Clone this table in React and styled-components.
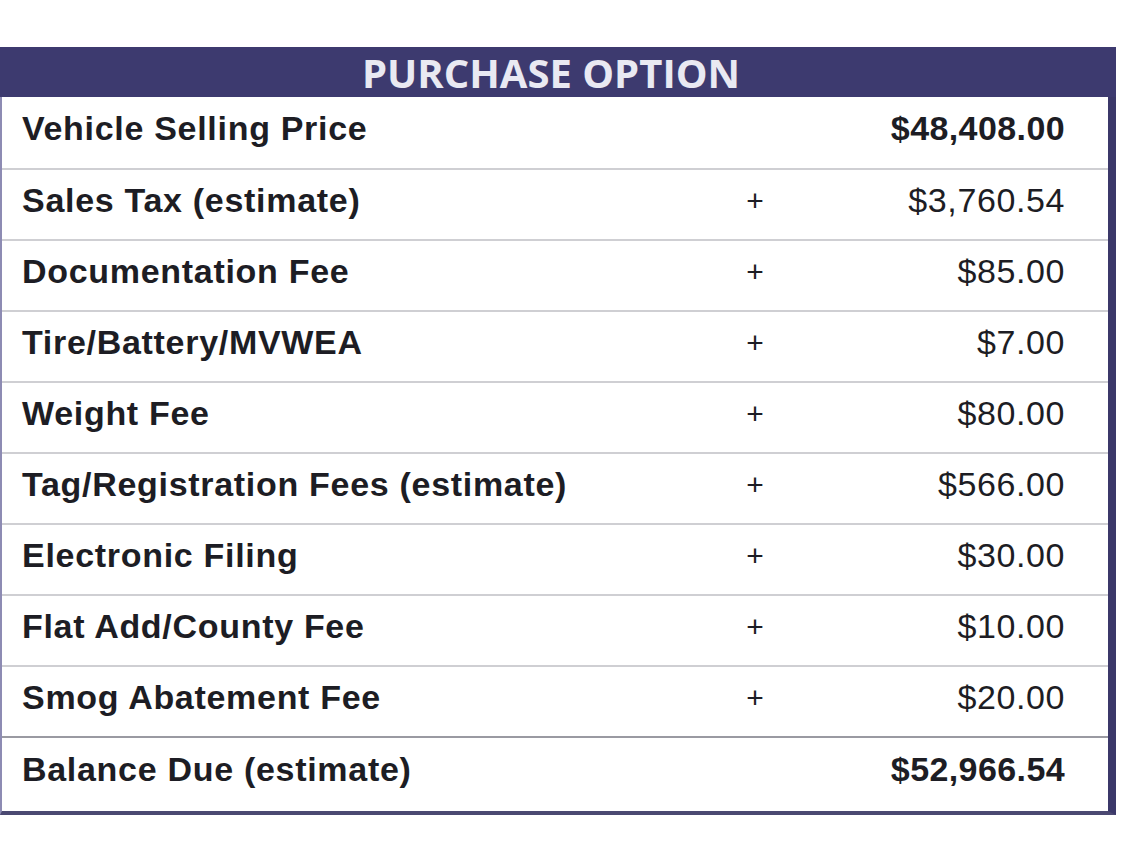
import React from "react";
import styled, { createGlobalStyle } from "styled-components";

const Global = createGlobalStyle`
  html, body { margin: 0; padding: 0; background: #ffffff; }
  body { font-family: "Liberation Sans", Arial, sans-serif; }
`;

const Page = styled.div`
  padding-top: 47px;
  width: 1125px;
  height: 866px;
  box-sizing: border-box;
  background: #ffffff;
`;

const Table = styled.div`
  width: 1116px;
  box-sizing: border-box;
  display: flex;
  flex-direction: column;
`;

const Header = styled.div`
  height: 50px;
  background: #3d3a6f;
  color: #e9e9f2;
  display: flex;
  align-items: center;
  justify-content: center;
  font-family: "Open Sans", "Liberation Sans", sans-serif;
  font-weight: 700;
  font-size: 40px;
  letter-spacing: 0;
  padding-right: 14px;
`;

const Body = styled.div`
  border-left: 2px solid #8d8bb3;
  border-right: 8px solid #3b3869;
  border-bottom: 4px solid #4b4972;
  display: flex;
  flex-direction: column;
`;

const Row = styled.div`
  display: grid;
  grid-template-columns: 1fr 60px 280px;
  align-items: center;
  height: ${(p) => (p.$last ? 75 : 71)}px;
  box-sizing: border-box;
  padding: 0 43px ${(p) => (p.$last ? 10 : 8)}px 20px;
  border-top: ${(p) =>
    p.$first ? "none" : `2px solid ${p.$last ? "#9a9aa2" : "#cfcfd3"}`};
  color: #1d1d24;
  font-size: 34px;
  letter-spacing: 0.7px;
`;

const Label = styled.div`
  font-weight: 700;
  white-space: nowrap;
`;

const Sign = styled.div`
  text-align: center;
  font-size: 30px;
  font-weight: 400;
  letter-spacing: 0;
`;

const Amount = styled.div`
  text-align: right;
  font-weight: ${(p) => (p.$bold ? 700 : 400)};
  letter-spacing: ${(p) => (p.$bold ? "0.4px" : "0.6px")};
`;

const rows = [
  ["Vehicle Selling Price", "", "$48,408.00", true],
  ["Sales Tax (estimate)", "+", "$3,760.54"],
  ["Documentation Fee", "+", "$85.00"],
  ["Tire/Battery/MVWEA", "+", "$7.00"],
  ["Weight Fee", "+", "$80.00"],
  ["Tag/Registration Fees (estimate)", "+", "$566.00"],
  ["Electronic Filing", "+", "$30.00"],
  ["Flat Add/County Fee", "+", "$10.00"],
  ["Smog Abatement Fee", "+", "$20.00"],
  ["Balance Due (estimate)", "", "$52,966.54", true],
];

export default function App() {
  return (
    <>
      <Global />
      <Page>
        <Table>
          <Header>PURCHASE OPTION</Header>
          <Body>
            {rows.map(([label, sign, amount, bold], i) => (
              <Row key={label} $first={i === 0} $last={i === rows.length - 1}>
                <Label>{label}</Label>
                <Sign>{sign}</Sign>
                <Amount $bold={bold}>{amount}</Amount>
              </Row>
            ))}
          </Body>
        </Table>
      </Page>
    </>
  );
}
